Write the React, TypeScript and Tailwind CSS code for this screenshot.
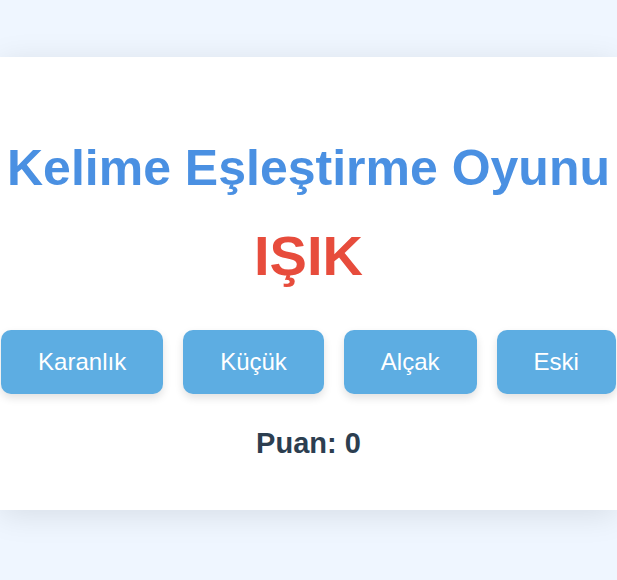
import { useState } from 'react'

const options = ['Karanlık', 'Küçük', 'Alçak', 'Eski']

export default function App() {
  const [score, setScore] = useState(0)

  return (
    <div className="min-h-screen overflow-hidden bg-[#eff6ff] pt-[57px] font-['Liberation_Sans',Arial,sans-serif]">
      <div className="flex w-full flex-col items-center bg-white pt-[83px] pb-[50px] shadow-[0_5px_30px_rgba(0,0,0,0.1)]">
        <h1 className="text-[50px] font-bold leading-[57px] text-[#4a90e2] whitespace-nowrap">
          Kelime Eşleştirme Oyunu
        </h1>
        <div className="mt-[27px] text-[56px] font-bold leading-[64px] text-[#e74c3c]">IŞIK</div>
        <div className="mt-[42px] flex flex-nowrap justify-center gap-[20px]">
          {options.map((opt) => (
            <button
              key={opt}
              onClick={() => opt === 'Karanlık' && setScore(score + 1)}
              className="shrink-0 rounded-[10px] bg-[#5dade2] px-[37px] py-[18px] text-[24px] leading-[28px] text-white shadow-[0_4px_8px_rgba(0,0,0,0.12)]"
            >
              {opt}
            </button>
          ))}
        </div>
        <div className="mt-[33px] text-[29px] font-bold leading-[33px] text-[#2c3e50]">Puan: {score}</div>
      </div>
    </div>
  )
}
